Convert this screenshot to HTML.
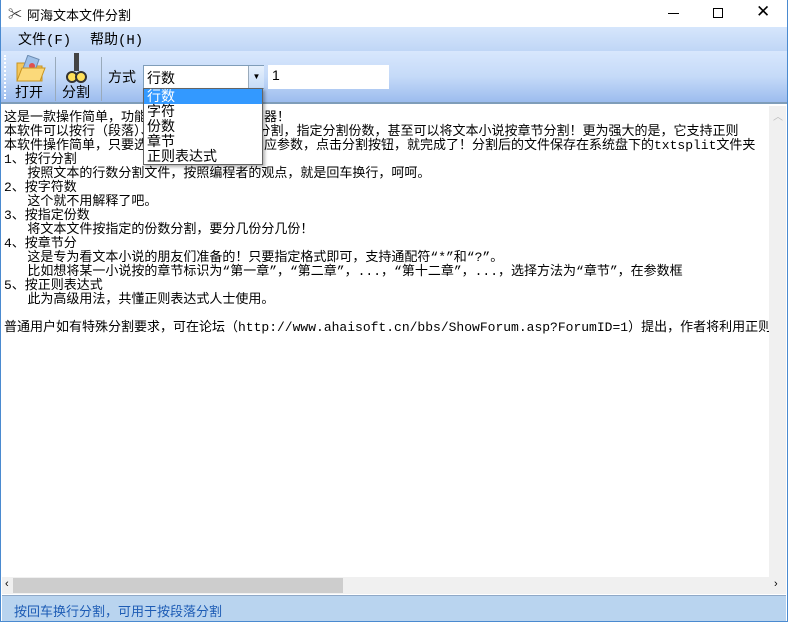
<!DOCTYPE html>
<html><head><meta charset="utf-8"><style>
*{margin:0;padding:0;box-sizing:border-box}
body{width:788px;height:622px;overflow:hidden;background:#fff;font-family:"Liberation Sans","Noto Sans CJK SC",sans-serif;position:relative}
.abs{position:absolute}
#title{left:0;top:0;width:788px;height:27px;background:#fff;font-size:13px}
#menu{left:0;top:27px;width:788px;height:24px;background:linear-gradient(#d6e6fc,#c0d6f6);font-size:14px;font-family:"Liberation Mono","Noto Sans CJK SC",monospace}
#tb{left:0;top:51px;width:788px;height:53px;background:linear-gradient(#d8e7fd,#c5daf8 50%,#9cbcee);border-bottom:2px solid #7f9db9}
#txt{left:2px;top:106px;width:767px;height:471px;font-size:13px;line-height:14px;white-space:pre;overflow:hidden;color:#000;padding-top:5px;padding-left:2px;font-family:"Liberation Mono","Noto Sans CJK SC",monospace}
#vs{left:769px;top:106px;width:17px;height:471px;background:#f0f0f0}
#hs{left:2px;top:577px;width:784px;height:17px;background:#f0f0f0}
#st{left:2px;top:595px;width:784px;height:26px;background:#b9d4ef;color:#1d5cb5;font-size:13px;padding:5px 0 0 12px;border-top:1px solid #8fa9c8}
.dd div{height:15px;line-height:15px;padding-left:3px;font-size:14px}
</style></head><body>
<div class="abs" style="left:0;top:0;width:788px;height:622px;border:1px solid #4a8ad0;border-top:none;z-index:9;pointer-events:none"></div>
<div id="title" class="abs">
 <span class="abs" style="left:8px;top:4px;font-size:14px;color:#333">✂</span>
 <span class="abs" style="left:27px;top:5px">阿海文本文件分割</span>
 <span class="abs" style="left:668px;top:13px;width:11px;height:1px;background:#000"></span>
 <span class="abs" style="left:713px;top:8px;width:10px;height:10px;border:1px solid #000"></span>
 <span class="abs" style="left:756px;top:2px;font-size:17px;font-weight:300">✕</span>
</div>
<div id="menu" class="abs"><span class="abs" style="left:18px;top:2px">文件(F)</span><span class="abs" style="left:90px;top:2px">帮助(H)</span></div>
<div id="tb" class="abs">
 <div class="abs" style="left:4px;top:4px;width:2px;height:44px;border-left:2px dotted #fff"></div>
 <svg class="abs" style="left:15px;top:4px" width="32" height="28"><path d="M2 8h8l3 3h14v15H2z" fill="#f4c65a" stroke="#c89420"/><rect x="10" y="2" width="12" height="14" fill="#9ec0e8" stroke="#6a8ab0" transform="rotate(20 16 9)"/><circle cx="17" cy="11" r="3" fill="#e05050"/><path d="M2 26l5-13h23l-5 13z" fill="#fbd97a" stroke="#c89420"/></svg>
 <span class="abs" style="left:15px;top:31px;font-size:14px">打开</span>
 <div class="abs" style="left:55px;top:6px;width:1px;height:44px;background:#9ab"></div>
 <svg class="abs" style="left:64px;top:2px" width="26" height="32"><rect x="10" y="0" width="5" height="18" fill="#444"/><circle cx="8" cy="24" r="5" fill="#ffe05a" stroke="#333" stroke-width="2"/><circle cx="17" cy="24" r="5" fill="#ffe05a" stroke="#333" stroke-width="2"/></svg>
 <span class="abs" style="left:62px;top:31px;font-size:14px">分割</span>
 <div class="abs" style="left:101px;top:6px;width:1px;height:44px;background:#9ab"></div>
 <span class="abs" style="left:108px;top:16px;font-size:14px">方式</span>
 <div class="abs" style="left:143px;top:14px;width:121px;height:24px;background:#fff;border:1px solid #7f9db9;font-size:14px;padding:2px 0 0 3px">行数
  <div class="abs" style="left:104px;top:0;width:16px;height:22px;background:linear-gradient(#e6f0fc,#c7dcf7);border-left:1px solid #9ab;font-size:8px;text-align:center;line-height:22px">▼</div></div>
 <div class="abs" style="left:268px;top:14px;width:121px;height:24px;background:#fff;font-size:14px;padding:2px 0 0 4px">1</div>
</div>
<div id="txt" class="abs">这是一款操作简单，功能强大的文本文件分割器！
本软件可以按行（段落）、按字符数、按份数分割，指定分割份数，甚至可以将文本小说按章节分割！更为强大的是，它支持正则
本软件操作简单，只要选择分割方式，输入相应参数，点击分割按钮，就完成了！分割后的文件保存在系统盘下的txtsplit文件夹
1、按行分割
   按照文本的行数分割文件，按照编程者的观点，就是回车换行，呵呵。
2、按字符数
   这个就不用解释了吧。
3、按指定份数
   将文本文件按指定的份数分割，要分几份分几份！
4、按章节分
   这是专为看文本小说的朋友们准备的！只要指定格式即可，支持通配符“*”和“?”。
   比如想将某一小说按的章节标识为“第一章”，“第二章”，...，“第十二章”，...，选择方法为“章节”，在参数框
5、按正则表达式
   此为高级用法，共懂正则表达式人士使用。

普通用户如有特殊分割要求，可在论坛（http://www.ahaisoft.cn/bbs/ShowForum.asp?ForumID=1）提出，作者将利用正则表</div>
<div id="vs" class="abs"><span class="abs" style="left:4px;top:2px;font-size:10px;color:#bbb">︿</span></div>
<div id="hs" class="abs"><span class="abs" style="left:3px;top:1px;font-size:11px">‹</span><div class="abs" style="left:11px;top:1px;width:330px;height:15px;background:#cdcdcd"></div><span class="abs" style="left:772px;top:1px;font-size:11px">›</span></div>
<div id="st" class="abs">按回车换行分割，可用于按段落分割</div>
<div class="abs dd" style="left:143px;top:88px;width:120px;height:77px;background:#fff;border:1px solid #646464;box-shadow:2px 2px 3px rgba(0,0,0,.3)">
 <div style="background:#3399ff;color:#fff">行数</div><div>字符</div><div>份数</div><div>章节</div><div>正则表达式</div>
</div>
</body></html>
